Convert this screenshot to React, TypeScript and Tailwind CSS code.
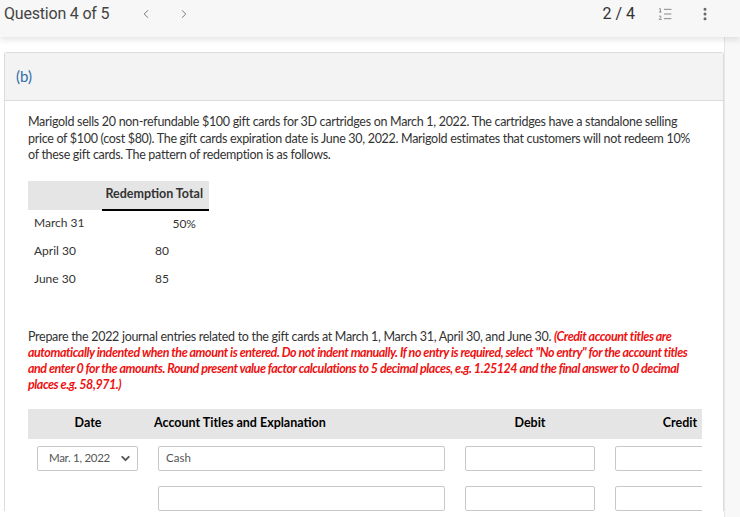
import { ChevronLeft, ChevronRight, ChevronDown, ListOrdered, EllipsisVertical } from 'lucide-react';

const redemption = [
  { date: 'March 31', value: '50%', right: true },
  { date: 'April 30', value: '80', right: false },
  { date: 'June 30', value: '85', right: false },
];

export default function App() {
  return (
    <div className="h-[517px] overflow-hidden bg-white font-['Lato',sans-serif] text-[#333]">
      {/* Top bar */}
      <div className="relative z-10 flex h-[37px] items-start justify-between bg-[#f7f7f7] pl-1 pr-[27px] pt-[2px] shadow-[0_3px_6px_rgba(0,0,0,0.10)]">
        <div className="flex items-center font-['Roboto',sans-serif] text-[16px] tracking-[-0.2px] text-[#444]">
          <span>Question 4 of 5</span>
          <button className="ml-[30px] text-[#666]">
            <ChevronLeft className="h-[14px] w-[14px]" strokeWidth={1.5} />
          </button>
          <button className="ml-[24px] text-[#666]">
            <ChevronRight className="h-[14px] w-[14px]" strokeWidth={1.5} />
          </button>
        </div>
        <div className="flex items-center font-['Roboto',sans-serif] text-[16px] text-[#333]">
          <span>2 / 4</span>
          <ListOrdered className="ml-[22px] h-4 w-4 text-[#888]" strokeWidth={1.5} />
          <EllipsisVertical className="ml-[24px] h-4 w-4 text-[#666]" strokeWidth={2.5} />
        </div>
      </div>

      <div className="flex h-[480px]">
        <div className="min-w-0 flex-1 pl-1 pt-[15px]">
          <div className="rounded-t-[3px] border border-b-0 border-[#dcdcdc]">
            {/* Card header */}
            <div className="flex h-[48px] items-center border-b border-[#dcdcdc] bg-[#f3f3f3] px-[11px] text-[15px] text-[#2f6fa7]">
              (b)
            </div>

            {/* Card body */}
            <div className="pl-[23px] pr-[21px] pt-[13px] text-[12.5px] leading-[16.5px]">
              <p className="tracking-[-0.3px]">
                Marigold sells 20 non-refundable $100 gift cards for 3D cartridges on March 1, 2022. The cartridges have a standalone selling price of $100 (cost $80). The gift cards expiration date is June 30, 2022. Marigold estimates that customers will not redeem 10% of these gift cards. The pattern of redemption is as follows.
              </p>

              <table className="mt-[17px] border-collapse text-[12px]">
                <thead>
                  <tr className="h-[29px] bg-[#e5e5e5]">
                    <th className="w-[74px]" />
                    <th className="w-[107px] border-b-2 border-black pr-[6px] text-right text-[12.5px] font-bold">Redemption Total</th>
                  </tr>
                </thead>
                <tbody>
                  {redemption.map((r) => (
                    <tr key={r.date} className="h-[28px]">
                      <td className="pl-[6px]">{r.date}</td>
                      <td className={r.right ? 'pr-[13px] text-right' : 'pl-[53px]'}>{r.value}</td>
                    </tr>
                  ))}
                </tbody>
              </table>

              <p className="mt-[35px] leading-[16px] tracking-[-0.3px]">
                Prepare the 2022 journal entries related to the gift cards at March 1, March 31, April 30, and June 30.{' '}
                <span className="font-bold italic tracking-[-0.45px] text-[#ee1111]">
                  (Credit account titles are automatically indented when the amount is entered. Do not indent manually. If no entry is required, select "No entry" for the account titles and enter 0 for the amounts. Round present value factor calculations to 5 decimal places, e.g. 1.25124 and the final answer to 0 decimal places e.g. 58,971.)
                </span>
              </p>

              {/* Journal entry table */}
              <div className="mt-[16px] overflow-hidden">
                <div className="w-[727px]">
                  <div className="grid h-[30px] grid-cols-[120px_307px_150px_150px] items-center bg-[#e5e5e5] text-[12.5px] font-bold text-black">
                    <div className="text-center">Date</div>
                    <div className="pl-[6px]">Account Titles and Explanation</div>
                    <div className="text-center">Debit</div>
                    <div className="text-center">Credit</div>
                  </div>
                  <div className="grid grid-cols-[120px_307px_150px_150px] gap-y-[15px] pt-[7px]">
                    <div className="px-[9px]">
                      <div className="flex h-[25px] w-[101px] items-center justify-between rounded-[2px] border border-[#c8c8c8] pl-[11px] pr-[5px] text-[11.5px] tracking-[-0.3px] text-[#555]">
                        <span>Mar. 1, 2022</span>
                        <ChevronDown className="h-[13px] w-[13px]" strokeWidth={3.5} />
                      </div>
                    </div>
                    <div className="px-[10px]">
                      <div className="flex h-[25px] items-center rounded-[2px] border border-[#c8c8c8] px-[7px] text-[11.5px] text-[#555]">Cash</div>
                    </div>
                    <div className="px-[10px]">
                      <div className="h-[25px] rounded-[2px] border border-[#c8c8c8]" />
                    </div>
                    <div className="px-[10px]">
                      <div className="h-[25px] rounded-[2px] border border-[#c8c8c8]" />
                    </div>

                    <div />
                    <div className="px-[10px]">
                      <div className="h-[25px] rounded-[2px] border border-[#c8c8c8]" />
                    </div>
                    <div className="px-[10px]">
                      <div className="h-[25px] rounded-[2px] border border-[#c8c8c8]" />
                    </div>
                    <div className="px-[10px]">
                      <div className="h-[25px] rounded-[2px] border border-[#c8c8c8]" />
                    </div>
                  </div>
                </div>
              </div>
            </div>
          </div>
        </div>
        <div className="w-[16px] border-l border-[#e6e6e6] bg-[#f8f8f8]" />
      </div>
    </div>
  );
}
